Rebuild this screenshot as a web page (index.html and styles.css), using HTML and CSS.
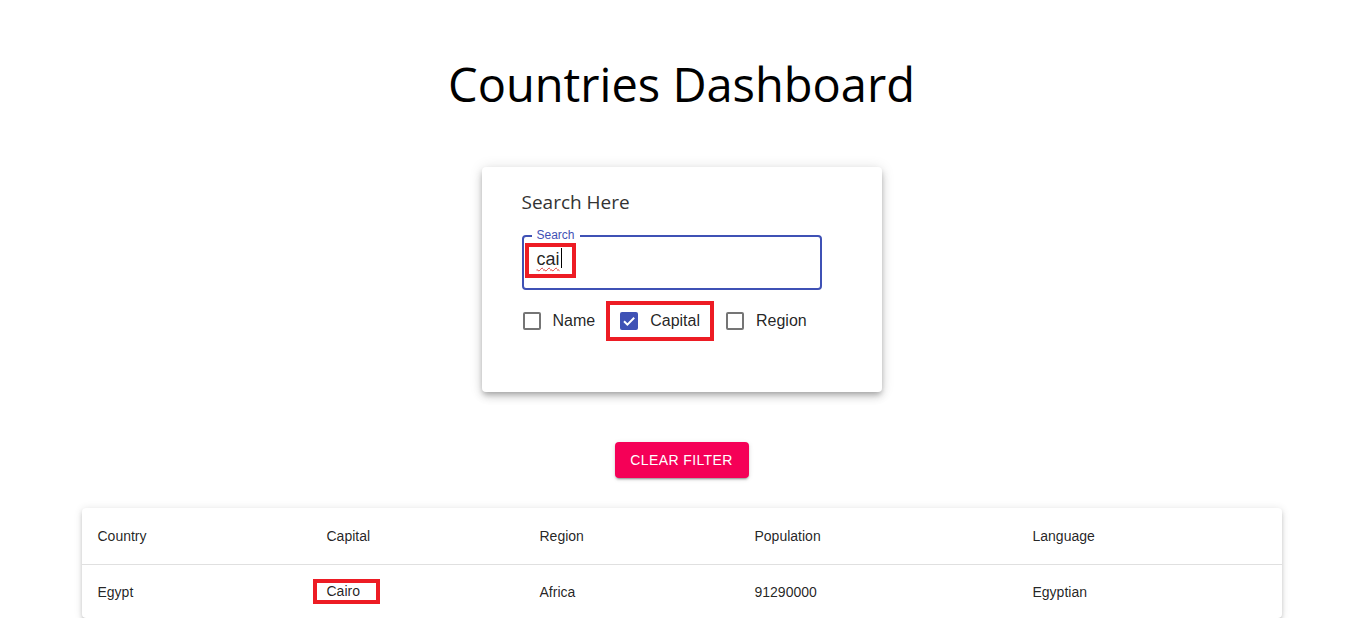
FILE: index.html
```html
<!DOCTYPE html>
<html lang="en">
<head>
  <meta charset="UTF-8" />
  <meta name="viewport" content="width=device-width, initial-scale=1.0" />
  <title>Countries Dashboard</title>
  <link rel="stylesheet" href="styles.css">
</head>
<body>
  <div class="page">
    <h1>Countries Dashboard</h1>

    <div class="search-card">
      <h2>Search Here</h2>
      <div class="field">
        <span class="field-label">Search</span>
        <div class="field-input"><span class="mark typed">cai<span class="caret"></span></span></div>
      </div>
      <div class="checks">
        <label class="check">
          <span class="box"></span>
          <span>Name</span>
        </label>
        <label class="check mark">
          <span class="box checked">
            <svg viewBox="0 0 18 18" width="18" height="18"><path d="M4 9.2l3.4 3.4L14.2 5.8" fill="none" stroke="#fff" stroke-width="2"/></svg>
          </span>
          <span>Capital</span>
        </label>
        <label class="check">
          <span class="box"></span>
          <span>Region</span>
        </label>
      </div>
    </div>

    <button class="clear-btn">Clear Filter</button>

    <div class="table-card">
      <table>
        <thead>
          <tr>
            <th class="col-country">Country</th>
            <th class="col-capital">Capital</th>
            <th class="col-region">Region</th>
            <th class="col-pop">Population</th>
            <th>Language</th>
          </tr>
        </thead>
        <tbody>
          <tr>
            <td>Egypt</td>
            <td><span class="mark cell-mark">Cairo</span></td>
            <td>Africa</td>
            <td>91290000</td>
            <td>Egyptian</td>
          </tr>
        </tbody>
      </table>
    </div>
  </div>
</body>
</html>
```

FILE: styles.css
```css
body {
  margin: 0;
  background: #fff;
  font-family: "Liberation Sans", Arial, sans-serif;
  color: rgba(0, 0, 0, 0.87);
}
.page {
  display: flex;
  flex-direction: column;
  align-items: center;
  padding-left: 4px;
}
h1 {
  font-family: "Open Sans", "Noto Sans", sans-serif;
  font-weight: 400;
  font-size: 47px;
  line-height: 56px;
  margin: 56px 0 55px;
  color: #000;
}
.search-card {
  width: 400px;
  height: 225px;
  box-sizing: border-box;
  padding: 22px 40px 0;
  background: #fff;
  border-radius: 4px;
  box-shadow: 0 3px 5px -1px rgba(0,0,0,0.2), 0 5px 8px 0 rgba(0,0,0,0.14), 0 1px 14px 0 rgba(0,0,0,0.12);
}
h2 {
  font-family: "Open Sans", "Noto Sans", sans-serif;
  font-weight: 400;
  font-size: 19px;
  line-height: 26px;
  margin: 0 0 20px;
  color: #333;
}
.field {
  position: relative;
  width: 300px;
  height: 55px;
  box-sizing: border-box;
  border: 2px solid #3f51b5;
  border-radius: 4px;
}
.field-label {
  position: absolute;
  top: -9px;
  left: 8px;
  padding: 0 5px;
  background: #fff;
  color: #3f51b5;
  font-size: 12px;
  line-height: 14px;
}
.field-input {
  padding: 10px 0 0 5px;
  font-size: 18px;
  line-height: 24px;
}
.mark {
  outline: 4px solid #ed1c24;
}
.typed {
  display: inline-block;
  padding: 1px 10px 0 8px;
  height: 26px;
  line-height: 23px;
  text-decoration: underline wavy #e53935;
  text-decoration-thickness: 1px;
  text-underline-offset: 2px;
}
.caret {
  display: inline-block;
  width: 1px;
  height: 20px;
  margin-left: 1px;
  vertical-align: -3px;
  background: #000;
}
.checks {
  display: flex;
  align-items: center;
  margin-top: 15px;
  margin-left: 1px;
  font-size: 16px;
}
.check {
  display: flex;
  align-items: center;
  gap: 12px;
  height: 32px;
  margin-right: 15px;
}
.check.mark {
  padding: 0 10px;
  height: 32px;
  margin-right: 16px;
}
.box {
  width: 18px;
  height: 18px;
  box-sizing: border-box;
  border: 2px solid #757575;
  border-radius: 2px;
  display: flex;
}
.box.checked {
  background: #3f51b5;
  border: none;
}
.clear-btn {
  margin-top: 50px;
  width: 134px;
  height: 36px;
  border: none;
  border-radius: 4px;
  background: #f50057;
  color: #fff;
  font-family: "Liberation Sans", Arial, sans-serif;
  font-size: 14px;
  letter-spacing: 0.4px;
  text-transform: uppercase;
  box-shadow: 0 3px 1px -2px rgba(0,0,0,0.2), 0 2px 2px 0 rgba(0,0,0,0.14), 0 1px 5px 0 rgba(0,0,0,0.12);
}
.table-card {
  margin-top: 30px;
  width: 1200px;
  background: #fff;
  border-radius: 4px;
  box-shadow: 0 3px 3px -2px rgba(0,0,0,0.2), 0 3px 4px 0 rgba(0,0,0,0.14), 0 1px 8px 0 rgba(0,0,0,0.12);
}
table {
  width: 100%;
  border-collapse: collapse;
  font-size: 14px;
}
th, td {
  text-align: left;
  font-weight: 400;
  padding: 0 16px;
}
th {
  height: 56px;
  border-bottom: 1px solid #e0e0e0;
}
td {
  height: 53px;
}
.col-country { width: 197px; }
.col-capital { width: 181px; }
.col-region { width: 183px; }
.col-pop { width: 246px; }
.cell-mark {
  display: inline-block;
  margin-left: -10px;
  padding: 0 16px 0 10px;
  line-height: 17px;
}
```
